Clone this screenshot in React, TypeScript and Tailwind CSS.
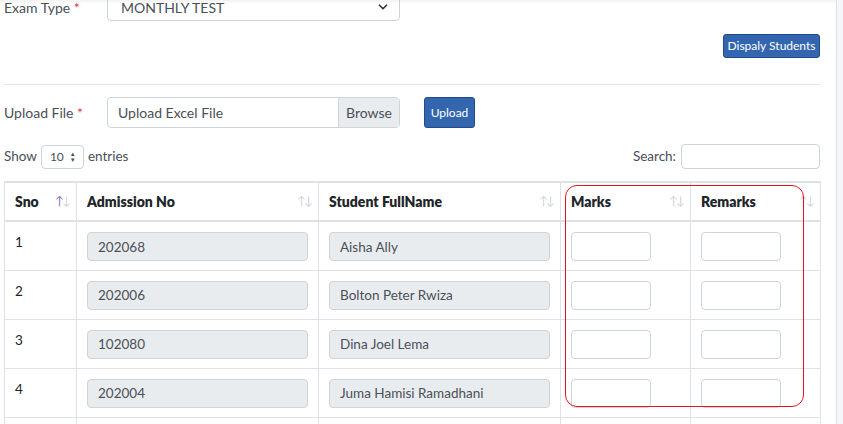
import { ChevronDown } from 'lucide-react'

const students = [
  { sno: 1, adm: '202068', name: 'Aisha Ally' },
  { sno: 2, adm: '202006', name: 'Bolton Peter Rwiza' },
  { sno: 3, adm: '102080', name: 'Dina Joel Lema' },
  { sno: 4, adm: '202004', name: 'Juma Hamisi Ramadhani' },
]

function SortIcon({ active }: { active?: boolean }) {
  return (
    <span className="absolute right-[7px] top-[12px] flex text-[12px] font-normal leading-none tracking-[-2px]">
      <span className={active ? 'text-[#8a6fc0]' : 'text-[#d0d3d7]'}>↑</span>
      <span className="text-[#d0d3d7]">↓</span>
    </span>
  )
}

export default function App() {
  return (
    <div className="flex h-[424px] w-[843px] overflow-hidden bg-white text-[13.5px] text-[#212529]" style={{ fontFamily: 'Lato, "Open Sans", sans-serif' }}>
      <div className="relative w-[836px] shrink-0 bg-white">
        <div className="pointer-events-none absolute inset-x-0 top-0 h-[4px] bg-gradient-to-b from-black/5 to-transparent" />
        <div className="-mt-[7px] pl-[4px] pr-[16px]">
          {/* exam type */}
          <div className="flex items-center">
            <label className="w-[103px] text-[14px] text-[#495057]">
              Exam Type <span className="text-[#dc3545]">*</span>
            </label>
            <div className="flex h-[28px] w-[293px] items-center justify-between rounded-[4px] border border-[#ced4da] pl-[13px] pr-[9px] text-[14px] text-[#495057]">
              <span>MONTHLY TEST</span>
              <ChevronDown className="h-[14px] w-[14px] text-[#343a40]" strokeWidth={3} />
            </div>
          </div>

          <div className="mt-[13px] flex justify-end">
            <button className="h-[24px] w-[97px] rounded-[3px] border border-[#1f4b8f] bg-[#3466b0] text-[12px] text-white">
              Dispaly Students
            </button>
          </div>

          <hr className="mt-[26px] border-t border-[#e3e5e8]" />

          {/* upload */}
          <div className="mt-[12px] flex items-center">
            <label className="w-[103px] text-[14px] text-[#495057]">
              Upload File <span className="text-[#dc3545]">*</span>
            </label>
            <div className="flex h-[31px] w-[293px] rounded-[4px] border border-[#ced4da] text-[14px] text-[#495057]">
              <div className="flex flex-1 items-center pl-[10px]">Upload Excel File</div>
              <div className="flex w-[61px] items-center justify-center border-l border-[#ced4da] bg-[#e9ecef]">Browse</div>
            </div>
            <button className="ml-[24px] h-[31px] w-[51px] rounded-[3px] border border-[#1f4b8f] bg-[#3466b0] text-[12px] text-white">
              Upload
            </button>
          </div>

          {/* datatable controls */}
          <div className="mt-[16px] flex items-center justify-between">
            <div className="flex items-center text-[#495057]">
              Show
              <div className="mx-[4px] flex h-[24px] w-[43px] items-center gap-[6px] rounded-[4px] border border-[#ced4da] pl-[8px] text-[12px]">
                10
                <span className="flex flex-col text-[6px] leading-[6px] text-[#495057]">
                  <span>▲</span>
                  <span>▼</span>
                </span>
              </div>
              entries
            </div>
            <div className="flex items-center text-[#495057]">
              Search:
              <div className="ml-[5px] h-[25px] w-[139px] rounded-[4px] border border-[#ced4da]" />
            </div>
          </div>

          {/* table */}
          <div className="relative mt-[12px]">
            <table className="w-[816px] table-fixed border-collapse border-t-2 border-[#dee2e6]">
              <colgroup>
                <col className="w-[72px]" />
                <col className="w-[242px]" />
                <col className="w-[242px]" />
                <col className="w-[130px]" />
                <col className="w-[130px]" />
              </colgroup>
              <thead>
                <tr className="h-[39px]">
                  {['Sno', 'Admission No', 'Student FullName', 'Marks', 'Remarks'].map((h, i) => (
                    <th key={h} className="relative border-x border-b-2 border-[#dee2e6] pl-[10px] text-left text-[14px] font-extrabold text-[#212529]">
                      {h}
                      <SortIcon active={i === 0} />
                    </th>
                  ))}
                </tr>
              </thead>
              <tbody>
                {students.map((s) => (
                  <tr key={s.sno} className="h-[49px]">
                    <td className="border border-[#dee2e6] pl-[10px] pt-[10px] align-top">{s.sno}</td>
                    <td className="border border-[#dee2e6] px-[10px] pt-[2px]">
                      <div className="flex h-[29px] items-center rounded-[4px] border border-[#ced4da] bg-[#e9ecef] pl-[10px] text-[#495057]">{s.adm}</div>
                    </td>
                    <td className="border border-[#dee2e6] px-[10px] pt-[2px]">
                      <div className="flex h-[29px] items-center rounded-[4px] border border-[#ced4da] bg-[#e9ecef] pl-[10px] text-[#495057]">{s.name}</div>
                    </td>
                    <td className="border border-[#dee2e6] px-[10px] pt-[2px]">
                      <div className="h-[29px] w-[80px] rounded-[4px] border border-[#ced4da]" />
                    </td>
                    <td className="border border-[#dee2e6] px-[10px] pt-[2px]">
                      <div className="h-[29px] w-[80px] rounded-[4px] border border-[#ced4da]" />
                    </td>
                  </tr>
                ))}
                <tr className="h-[20px]">
                  <td className="border border-[#dee2e6]" />
                  <td className="border border-[#dee2e6]" />
                  <td className="border border-[#dee2e6]" />
                  <td className="border border-[#dee2e6]" />
                  <td className="border border-[#dee2e6]" />
                </tr>
              </tbody>
            </table>
            <div className="pointer-events-none absolute left-[561px] top-[4px] h-[222px] w-[239px] rounded-[12px] border border-[#e8121c]" />
          </div>
        </div>
      </div>
      <div className="flex-1 border-l border-[#dee2e6] bg-[#f4f6f9]" />
    </div>
  )
}
